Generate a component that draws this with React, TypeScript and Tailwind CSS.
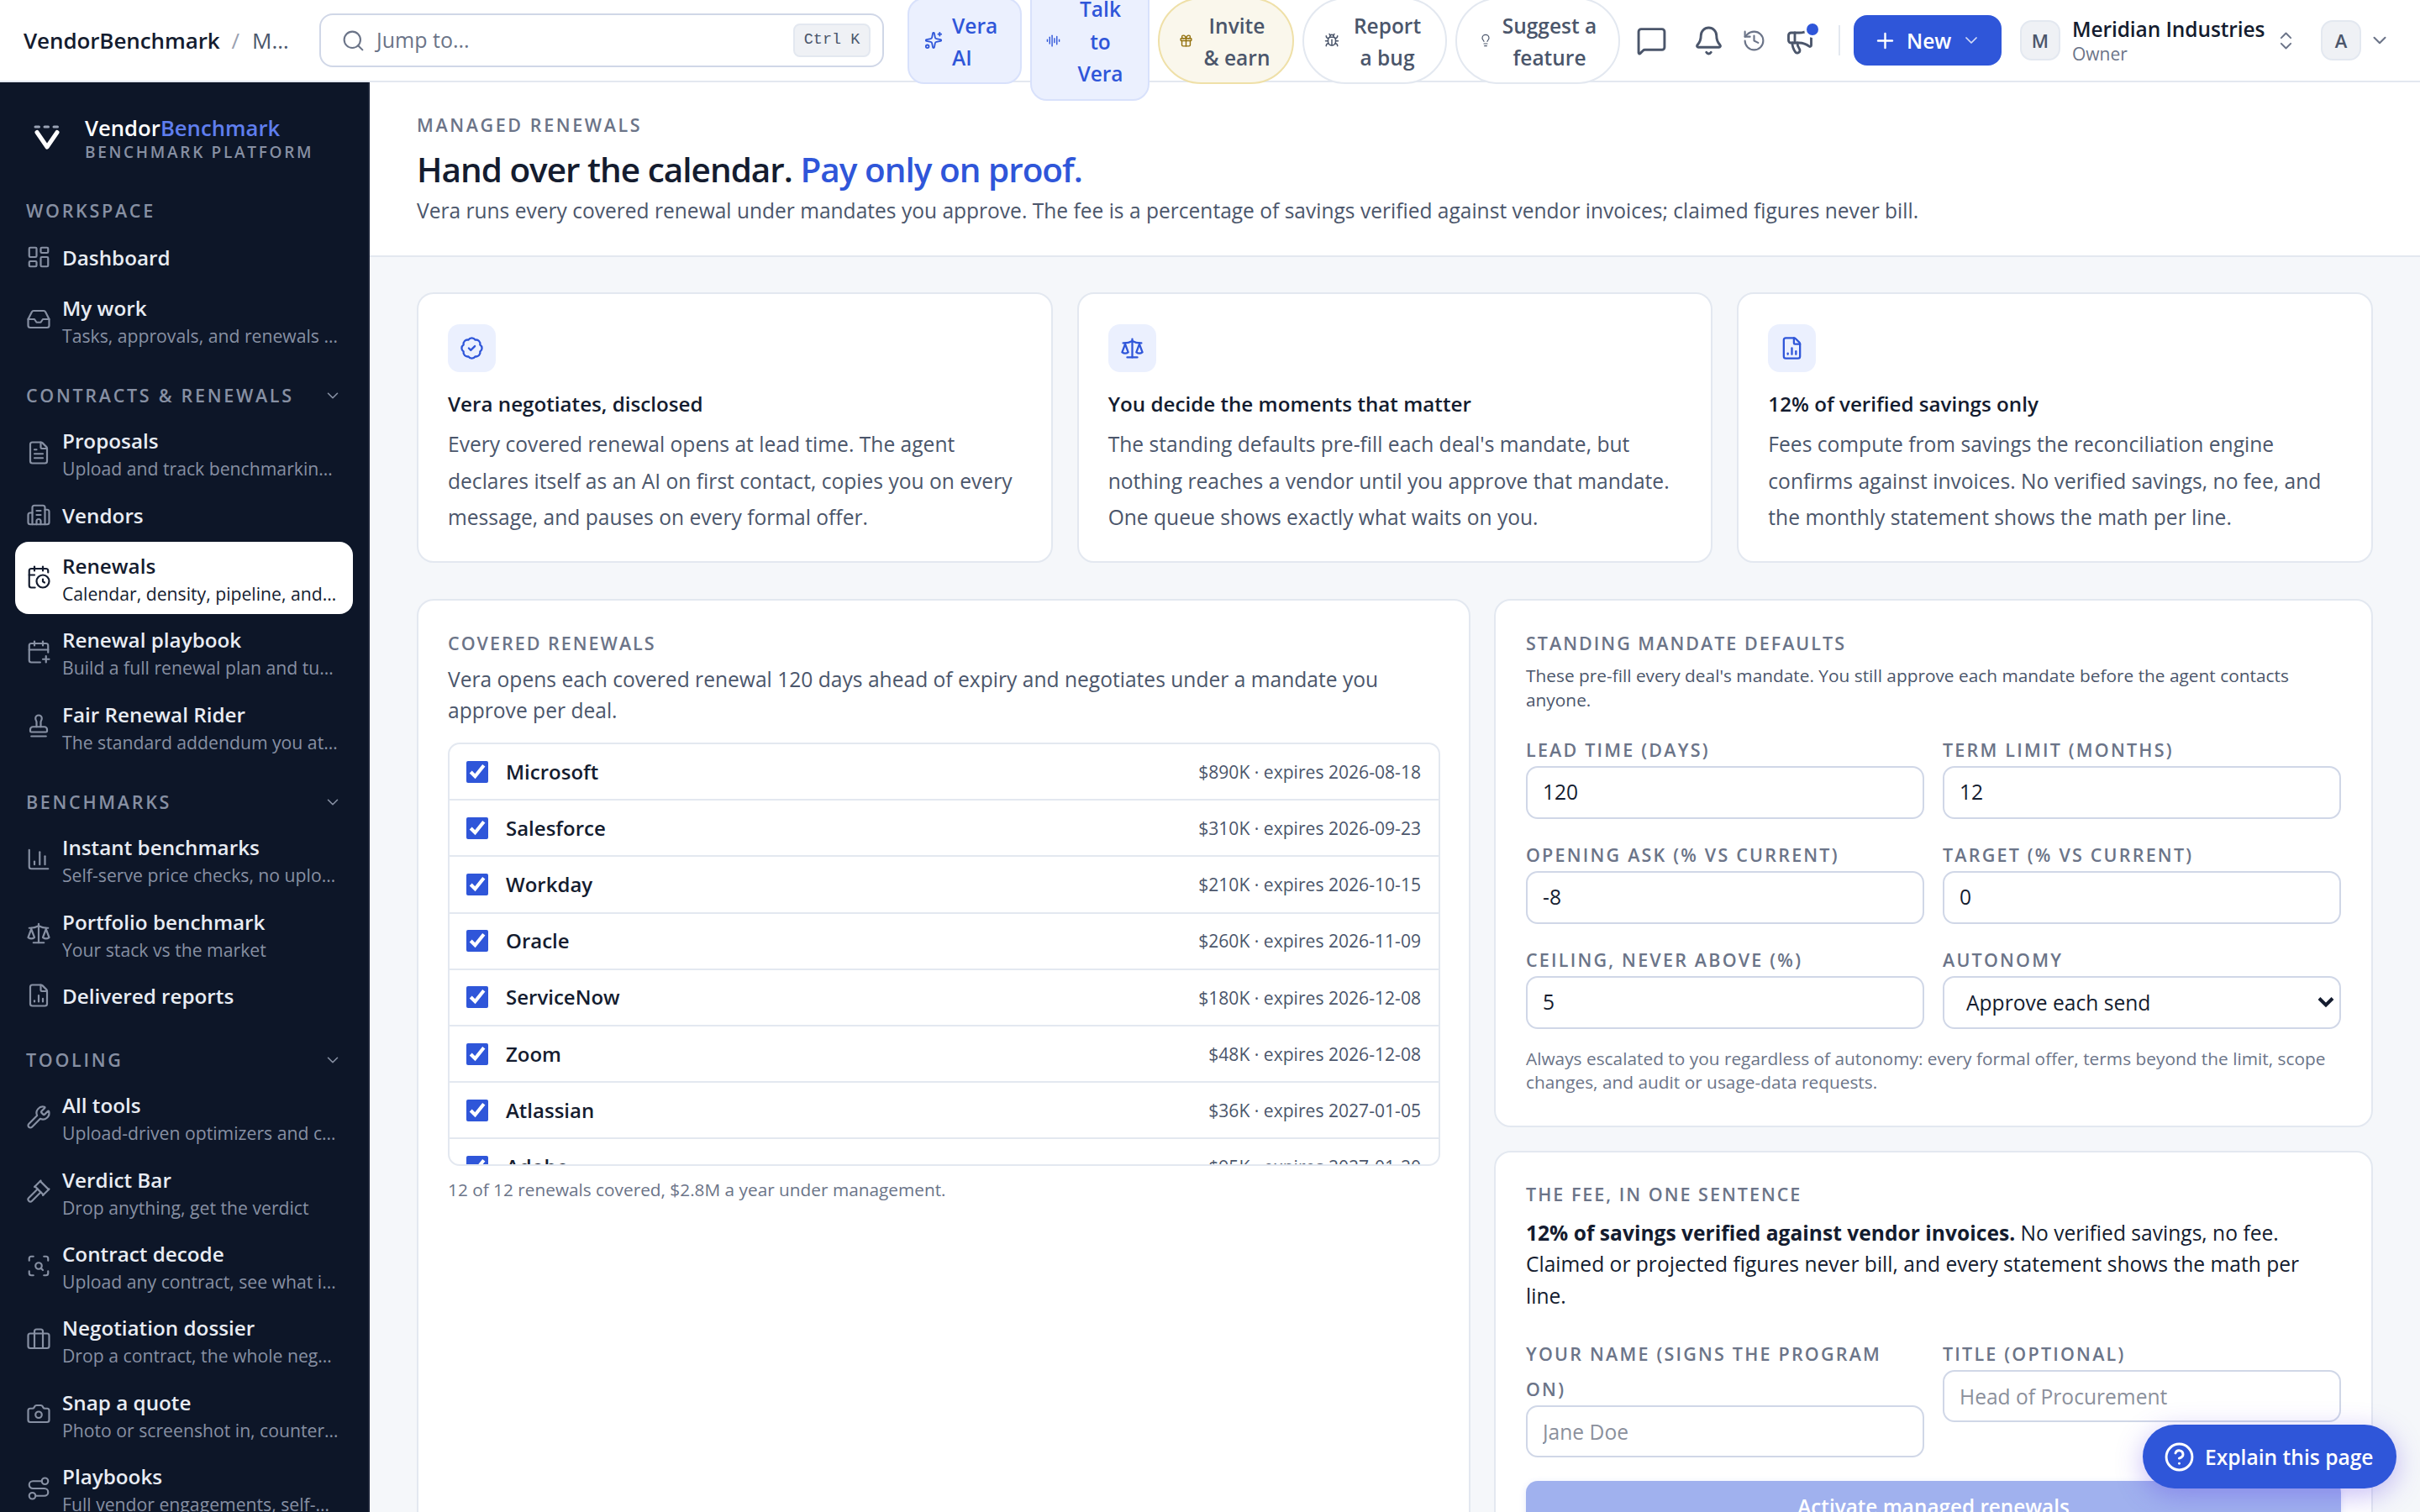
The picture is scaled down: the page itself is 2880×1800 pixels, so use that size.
import React from 'react';
import {
  AudioLines,
  BadgeCheck,
  Bell,
  Briefcase,
  Bug,
  Building2,
  CalendarClock,
  CalendarPlus,
  Camera,
  ChartColumn,
  ChevronDown,
  ChevronsUpDown,
  CircleQuestionMark,
  FileChartColumn,
  FileText,
  Gavel,
  Gift,
  History,
  Inbox,
  LayoutDashboard,
  Lightbulb,
  Megaphone,
  MessageSquare,
  Plus,
  Route,
  Scale,
  ScanSearch,
  Search,
  Sparkles,
  Stamp,
  Wrench,
} from 'lucide-react';

type IconType = React.ComponentType<{ size?: number; strokeWidth?: number; className?: string }>;

interface NavItem {
  icon: IconType;
  label: string;
  hint?: string;
  active?: boolean;
}

const NAV_SECTIONS: { title: string; collapsible: boolean; items: NavItem[] }[] = [
  {
    title: 'WORKSPACE',
    collapsible: false,
    items: [
      { icon: LayoutDashboard, label: 'Dashboard' },
      { icon: Inbox, label: 'My work', hint: 'Tasks, approvals, and renewals …' },
    ],
  },
  {
    title: 'CONTRACTS & RENEWALS',
    collapsible: true,
    items: [
      { icon: FileText, label: 'Proposals', hint: 'Upload and track benchmarkin…' },
      { icon: Building2, label: 'Vendors' },
      { icon: CalendarClock, label: 'Renewals', hint: 'Calendar, density, pipeline, and…', active: true },
      { icon: CalendarPlus, label: 'Renewal playbook', hint: 'Build a full renewal plan and tu…' },
      { icon: Stamp, label: 'Fair Renewal Rider', hint: 'The standard addendum you at…' },
    ],
  },
  {
    title: 'BENCHMARKS',
    collapsible: true,
    items: [
      { icon: ChartColumn, label: 'Instant benchmarks', hint: 'Self-serve price checks, no uplo…' },
      { icon: Scale, label: 'Portfolio benchmark', hint: 'Your stack vs the market' },
      { icon: FileChartColumn, label: 'Delivered reports' },
    ],
  },
  {
    title: 'TOOLING',
    collapsible: true,
    items: [
      { icon: Wrench, label: 'All tools', hint: 'Upload-driven optimizers and c…' },
      { icon: Gavel, label: 'Verdict Bar', hint: 'Drop anything, get the verdict' },
      { icon: ScanSearch, label: 'Contract decode', hint: 'Upload any contract, see what i…' },
      { icon: Briefcase, label: 'Negotiation dossier', hint: 'Drop a contract, the whole neg…' },
      { icon: Camera, label: 'Snap a quote', hint: 'Photo or screenshot in, counter…' },
      { icon: Route, label: 'Playbooks', hint: 'Full vendor engagements, self-…' },
    ],
  },
];

const FEATURES: { icon: IconType; title: string; lines: string[] }[] = [
  {
    icon: BadgeCheck,
    title: 'Vera negotiates, disclosed',
    lines: ['Every covered renewal opens at lead time. The agent', 'declares itself as an AI on first contact, copies you on every', 'message, and pauses on every formal offer.'],
  },
  {
    icon: Scale,
    title: 'You decide the moments that matter',
    lines: ["The standing defaults pre-fill each deal's mandate, but", 'nothing reaches a vendor until you approve that mandate.', 'One queue shows exactly what waits on you.'],
  },
  {
    icon: FileChartColumn,
    title: '12% of verified savings only',
    lines: ['Fees compute from savings the reconciliation engine', 'confirms against invoices. No verified savings, no fee, and', 'the monthly statement shows the math per line.'],
  },
];

const RENEWALS = [
  { vendor: 'Microsoft', value: '$890K', expires: '2026-08-18' },
  { vendor: 'Salesforce', value: '$310K', expires: '2026-09-23' },
  { vendor: 'Workday', value: '$210K', expires: '2026-10-15' },
  { vendor: 'Oracle', value: '$260K', expires: '2026-11-09' },
  { vendor: 'ServiceNow', value: '$180K', expires: '2026-12-08' },
  { vendor: 'Zoom', value: '$48K', expires: '2026-12-08' },
  { vendor: 'Atlassian', value: '$36K', expires: '2027-01-05' },
  { vendor: 'Adobe', value: '$95K', expires: '2027-01-20' },
];

const TopBar: React.FC = () => (
  <header className="relative z-10 flex h-[98px] shrink-0 items-center border-b-2 border-[#e3e8f0] bg-white text-[24.5px]">
    <div className="flex w-[380px] shrink-0 items-center pl-[28px] text-[26px]">
      <span className="font-semibold tracking-[-0.1px] text-[#141c2f]">VendorBenchmark</span>
      <span className="ml-[14px] text-[#9aa1b0]">/</span>
      <span className="ml-[15px] text-[#4b566b]">M…</span>
    </div>

    <div className="flex h-[64px] w-[672px] shrink-0 items-center rounded-[16px] border-2 border-[#d0d7e7] bg-white pl-[24px] pr-[14px] text-[25px] text-[#6b7488]">
      <Search size={29} strokeWidth={1.75} className="shrink-0" />
      <span className="ml-[13px]">Jump to...</span>
      <kbd className="ml-auto flex h-[40px] w-[92px] items-center justify-center rounded-[8px] border-2 border-[#e3e8f0] bg-[#eff1f5] font-['Liberation_Mono',monospace] text-[18.5px] text-[#4b566b]">
        Ctrl K
      </kbd>
    </div>

    {/* Action pills */}
    <div className="ml-[28px] flex shrink-0 items-center gap-[10px] font-semibold leading-[38.5px] text-[#4b566b]">
      <button className="flex h-[103px] w-[136px] items-center rounded-[20px] border-2 border-[#d8e1fb] bg-[#ebf0fe] pl-[18px] text-left font-semibold text-[#2f56d9]">
        <Sparkles size={22} strokeWidth={2} className="mr-[11px] shrink-0" />
        <span className="pt-[4px]">Vera<br />AI</span>
      </button>
      <button className="flex h-[143px] w-[142px] items-center rounded-[20px] border-2 border-[#d8e1fb] bg-[#ebf0fe] pl-[17px] pr-[9px] font-semibold text-[#2f56d9]">
        <AudioLines size={17} strokeWidth={2} className="shrink-0" />
        <span className="flex-1 pt-[4px] text-center">Talk<br />to<br />Vera</span>
      </button>
      <button className="flex h-[103px] w-[162px] items-center rounded-full border-2 border-[#efe0a8] bg-[#faf7ec] pl-[23px] pr-[14px] font-semibold">
        <Gift size={17} strokeWidth={2} className="shrink-0 text-[#92700c]" />
        <span className="flex-1 pt-[4px] text-center">Invite<br />&amp; earn</span>
      </button>
      <button className="flex h-[103px] w-[172px] items-center rounded-full border-2 border-[#e3e8f0] bg-white pl-[24px] pr-[12px] font-semibold">
        <Bug size={18} strokeWidth={2} className="shrink-0" />
        <span className="flex-1 pt-[4px] text-center">Report<br />a bug</span>
      </button>
      <button className="flex h-[103px] w-[196px] items-center rounded-full border-2 border-[#e3e8f0] bg-white pl-[26px] pr-[14px] font-semibold">
        <Lightbulb size={16} strokeWidth={1.75} className="shrink-0" />
        <span className="flex-1 pt-[4px] text-center">Suggest a<br />feature</span>
      </button>
    </div>

    <div className="ml-[19px] flex shrink-0 items-center text-[#4b566b]">
      <MessageSquare size={37} strokeWidth={1.9} />
      <Bell size={37} strokeWidth={1.9} className="ml-[31px]" />
      <History size={29} strokeWidth={1.75} className="ml-[21px] text-[#6b7488]" />
      <span className="relative ml-[22px]">
        <Megaphone size={36} strokeWidth={1.9} />
        <span className="absolute -top-[5px] left-[23px] size-[20px] rounded-full border-[3px] border-white bg-[#2f56d9]" />
      </span>
    </div>
    <div className="ml-[28px] h-[36px] w-[2px] shrink-0 bg-[#e3e8f0]" />

    <button className="ml-[16px] flex h-[60px] w-[176px] shrink-0 items-center rounded-[16px] bg-[#2f56d9] pl-[23px] font-semibold text-white">
      <Plus size={29} strokeWidth={2} />
      <span className="ml-[11px] pt-[2px]">New</span>
      <ChevronDown size={24} strokeWidth={1.75} className="ml-[12px] opacity-80" />
    </button>

    <div className="ml-[22px] flex shrink-0 items-center">
      <span className="flex size-[48px] items-center justify-center rounded-[14px] border-2 border-[#e3e8f0] bg-[#eff1f5] text-[22px] font-semibold text-[#4b566b]">M</span>
      <div className="ml-[14px] w-[241px]">
        <div className="text-[24.5px] font-semibold leading-[30px] tracking-[-0.1px] text-[#141c2f]">Meridian Industries</div>
        <div className="pt-px text-[21px] leading-[26px] text-[#6b7488]">Owner</div>
      </div>
      <ChevronsUpDown size={27} strokeWidth={1.75} className="text-[#6b7488]" />
    </div>
    <div className="ml-[28px] flex shrink-0 items-center">
      <span className="flex size-[48px] items-center justify-center rounded-[14px] border-2 border-[#e3e8f0] bg-[#eff1f5] text-[22px] font-semibold text-[#4b566b]">A</span>
      <ChevronDown size={26} strokeWidth={1.9} className="ml-[9px] text-[#6b7488]" />
    </div>
  </header>
);

const NavRow: React.FC<{ item: NavItem }> = ({ item }) => {
  const Icon = item.icon;
  return (
    <a
      className={`flex shrink-0 items-center rounded-[16px] pl-[13px] ${item.hint ? 'h-[86.4px]' : 'h-[58px]'} ${
        item.active ? 'bg-white text-[#141c2f]' : 'text-[#e8ecf3]'
      }`}
    >
      <Icon size={30} strokeWidth={1.75} className={`-mt-[2px] shrink-0 ${item.active ? '' : 'text-[#8790a3]'}`} />
      <span className="ml-[13px] whitespace-nowrap">
        <span className="block text-[24.25px] font-semibold leading-[36px]">{item.label}</span>
        {item.hint && (
          <span className={`block text-[21.2px] font-medium leading-[29px] ${item.active ? '' : 'text-[#8790a3]'}`}>{item.hint}</span>
        )}
      </span>
    </a>
  );
};

const Sidebar: React.FC = () => (
  <aside className="h-full w-[440px] shrink-0 overflow-hidden border-r-2 border-[#1d2539] bg-[#0d1628]">
    <div className="flex h-[130px] items-center pl-[36px]">
      <svg width="38" height="38" viewBox="0 0 38 38" fill="none" strokeLinecap="round" strokeLinejoin="round">
        <path d="M6 7h4.500M17 7h4.500M28 7h4.500" stroke="#9aa3b5" strokeWidth="3" />
        <path d="M8 13.500 20 31 32 13.500" stroke="#fff" strokeWidth="5" />
      </svg>
      <div className="ml-[27px] pt-[5px]">
        <div className="text-[25.7px] font-semibold leading-[30px] text-white">
          Vendor<span className="text-[#5f7eee]">Benchmark</span>
        </div>
        <div className="text-[19px] font-semibold leading-[26px] tracking-[2.700px] text-[#8790a3]">BENCHMARK PLATFORM</div>
      </div>
    </div>
    <nav className="pl-[18px] pr-[18px]">
      {NAV_SECTIONS.map((section, index) => (
        <div key={section.title}>
          <div className={`flex items-center justify-between pl-[13px] pr-[13px] ${index === 0 ? 'h-[50px] pb-[3px]' : 'h-[72.3px] pt-[21px]'}`}>
            <span className="whitespace-nowrap text-[21.5px] font-semibold tracking-[2.700px] text-[#8790a3]">{section.title}</span>
            {section.collapsible && <ChevronDown size={22} strokeWidth={1.75} className="shrink-0 text-[#8790a3]" />}
          </div>
          <div className="flex flex-col gap-[2px]">
            {section.items.map(item => (
              <NavRow key={item.label} item={item} />
            ))}
          </div>
        </div>
      ))}
    </nav>
  </aside>
);

const Eyebrow: React.FC<{ children: React.ReactNode }> = ({ children }) => (
  <div className="text-[21.5px] font-semibold leading-[30px] tracking-[2px] text-[#6b7488]">{children}</div>
);

const Field: React.FC<{ label: React.ReactNode; children: React.ReactNode }> = ({ label, children }) => (
  <label className="block">
    <span className="-mb-[2px] block pt-[2px] text-[21.5px] font-semibold leading-[42px] tracking-[2.200px] text-[#6b7488]">{label}</span>
    {children}
  </label>
);

const INPUT = 'block h-[62.5px] w-full rounded-[14px] border-2 border-[#d0d7e7] bg-white px-[18px] text-[24.6px] text-[#141c2f] placeholder:text-[#8b909c]';

const CoveredRenewals: React.FC = () => (
  <section className="w-[1254px] shrink-0 rounded-[20px] border-2 border-[#e3e8f0] bg-white pl-[35px] pr-[34px] pt-[36px]">
    <Eyebrow>COVERED RENEWALS</Eyebrow>
    <p className="mt-[10px] text-[24.6px] leading-[36.5px] text-[#4b566b]">
      Vera opens each covered renewal 120 days ahead of expiry and negotiates under a mandate you
      <br />
      approve per deal.
    </p>
    <div className="mt-[20px] h-[504px] overflow-hidden rounded-[14px] border-2 border-[#e3e8f0]">
      {RENEWALS.map(r => (
        <div key={r.vendor} className="flex h-[67.2px] items-center border-b-2 border-[#e3e8f0] pl-[20px] pr-[21px]">
          <input type="checkbox" defaultChecked className="size-[26px] accent-[#2f56d9]" />
          <span className="ml-[21px] text-[24px] font-semibold text-[#141c2f]">{r.vendor}</span>
          <span className="ml-auto text-[21.1px] text-[#4b566b]">
            {r.value} · expires {r.expires}
          </span>
        </div>
      ))}
    </div>
    <p className="mt-[13px] text-[20.8px] leading-[30px] text-[#6b7488]">12 of 12 renewals covered, $2.8M a year under management.</p>
  </section>
);

const MandateDefaults: React.FC = () => (
  <section className="h-[629px] shrink-0 rounded-[20px] border-2 border-[#e3e8f0] bg-white px-[36px] pt-[36px]">
    <Eyebrow>STANDING MANDATE DEFAULTS</Eyebrow>
    <p className="mt-[9px] whitespace-nowrap text-[20.85px] leading-[28.5px] text-[#4b566b]">
      These pre-fill every deal's mandate. You still approve each mandate before the agent contacts
      <br />
      anyone.
    </p>
    <div className="mt-[23px] grid grid-cols-2 gap-x-[22px] gap-y-[20.5px]">
      <Field label="LEAD TIME (DAYS)"><input className={`${INPUT} pb-[2px]`} defaultValue="120" /></Field>
      <Field label="TERM LIMIT (MONTHS)"><input className={`${INPUT} pb-[2px]`} defaultValue="12" /></Field>
      <Field label="OPENING ASK (% VS CURRENT)"><input className={`${INPUT} pb-[2px]`} defaultValue="-8" /></Field>
      <Field label="TARGET (% VS CURRENT)"><input className={`${INPUT} pb-[2px]`} defaultValue="0" /></Field>
      <Field label="CEILING, NEVER ABOVE (%)"><input className={`${INPUT} pb-[2px]`} defaultValue="5" /></Field>
      <Field label="AUTONOMY">
        <span className="relative block">
          <select className={`${INPUT} appearance-none pl-[26px] pt-[3px]`} defaultValue="each">
            <option value="each">Approve each send</option>
          </select>
          <svg className="absolute right-[8px] top-[23px]" width="20" height="16" viewBox="0 0 20 16" fill="none" stroke="#141c2f" strokeWidth="4">
            <path d="m2 3.500 8 8 8-8" />
          </svg>
        </span>
      </Field>
    </div>
    <p className="mt-[21px] whitespace-nowrap text-[20.85px] leading-[28.5px] text-[#6b7488]">
      Always escalated to you regardless of autonomy: every formal offer, terms beyond the limit, scope
      <br />
      changes, and audit or usage-data requests.
    </p>
  </section>
);

const FeeCard: React.FC = () => (
  <section className="h-[600px] shrink-0 rounded-[20px] border-2 border-[#e3e8f0] bg-white px-[36px] pt-[35px]">
    <Eyebrow>THE FEE, IN ONE SENTENCE</Eyebrow>
    <p className="mt-[12px] text-[24.6px] leading-[37.3px] text-[#141c2f]">
      <strong className="font-bold">12% of savings verified against vendor invoices.</strong> No verified savings, no fee.
      <br />
      Claimed or projected figures never bill, and every statement shows the math per
      <br />
      line.
    </p>
    <div className="mt-[28px] grid grid-cols-2 gap-x-[22px]">
      <Field label={<>YOUR NAME (SIGNS THE PROGRAM<br />ON)</>}><input className={INPUT} placeholder="Jane Doe" /></Field>
      <Field label="TITLE (OPTIONAL)"><input className={INPUT} placeholder="Head of Procurement" /></Field>
    </div>
    <button className="mt-[28px] h-[62px] w-full rounded-[14px] bg-[#a0b1ee] text-[24.3px] font-semibold text-white shadow-[0_2px_8px_rgba(47,86,217,0.12)]">
      Activate managed renewals
    </button>
  </section>
);

const App: React.FC = () => (
  <div className="relative flex h-[1800px] w-[2880px] flex-col overflow-hidden bg-white font-['Open_Sans','Noto_Sans',sans-serif]">
    <TopBar />
    <div className="flex min-h-0 flex-1">
      <Sidebar />
      <main className="flex min-w-0 flex-1 flex-col overflow-hidden bg-[#f5f7fa]">
        <div className="h-[208px] shrink-0 border-b-2 border-[#e3e8f0] bg-white pl-[56px] pt-[36px]">
          <div className="text-[21.5px] font-semibold leading-[30px] tracking-[2.600px] text-[#6b7488]">MANAGED RENEWALS</div>
          <h1 className="mt-[10px] text-[40.5px] font-semibold leading-[56px] tracking-[-1px] text-[#141c2f]">
            Hand over the calendar. <span className="text-[#2f56d9]">Pay only on proof.</span>
          </h1>
          <p className="mt-[3px] text-[24.55px] leading-[36px] text-[#4b566b]">
            Vera runs every covered renewal under mandates you approve. The fee is a percentage of savings verified against vendor invoices; claimed figures never bill.
          </p>
        </div>

        <div className="flex flex-col pl-[56px] pr-[56px] pt-[42px]">
          <div className="grid grid-cols-3 gap-[29px]">
            {FEATURES.map(({ icon: Icon, title, lines }) => (
              <section key={title} className="h-[322px] rounded-[20px] border-2 border-[#e3e8f0] bg-white pl-[35px] pt-[36px]">
                <div className="flex size-[57px] items-center justify-center rounded-[14px] bg-[#ebf0fe] text-[#2f56d9]">
                  <Icon size={29} strokeWidth={1.9} />
                </div>
                <h2 className="mt-[20px] text-[24.2px] font-semibold leading-[36px] text-[#141c2f]">{title}</h2>
                <p className="mt-[8px] whitespace-nowrap text-[24.6px] leading-[43.5px] text-[#4b566b]">
                  {lines.map(line => (
                    <span key={line} className="block">{line}</span>
                  ))}
                </p>
              </section>
            ))}
          </div>

          <div className="mt-[43px] flex gap-[28px]">
            <CoveredRenewals />
            <div className="flex min-w-0 flex-1 flex-col gap-[28px]">
              <MandateDefaults />
              <FeeCard />
            </div>
          </div>
        </div>
      </main>
    </div>

    {/* Floating help button */}
    <button className="absolute left-[2550px] top-[1696px] z-20 flex h-[76px] w-[302px] items-center rounded-full bg-[#2f56d9] pl-[25px] text-[24.6px] font-semibold text-white shadow-[0_8px_32px_rgba(91,63,229,0.35)]">
      <CircleQuestionMark size={37} strokeWidth={1.9} className="shrink-0" />
      <span className="ml-[12px] whitespace-nowrap pt-[2px]">Explain this page</span>
    </button>
  </div>
);

export default App;
